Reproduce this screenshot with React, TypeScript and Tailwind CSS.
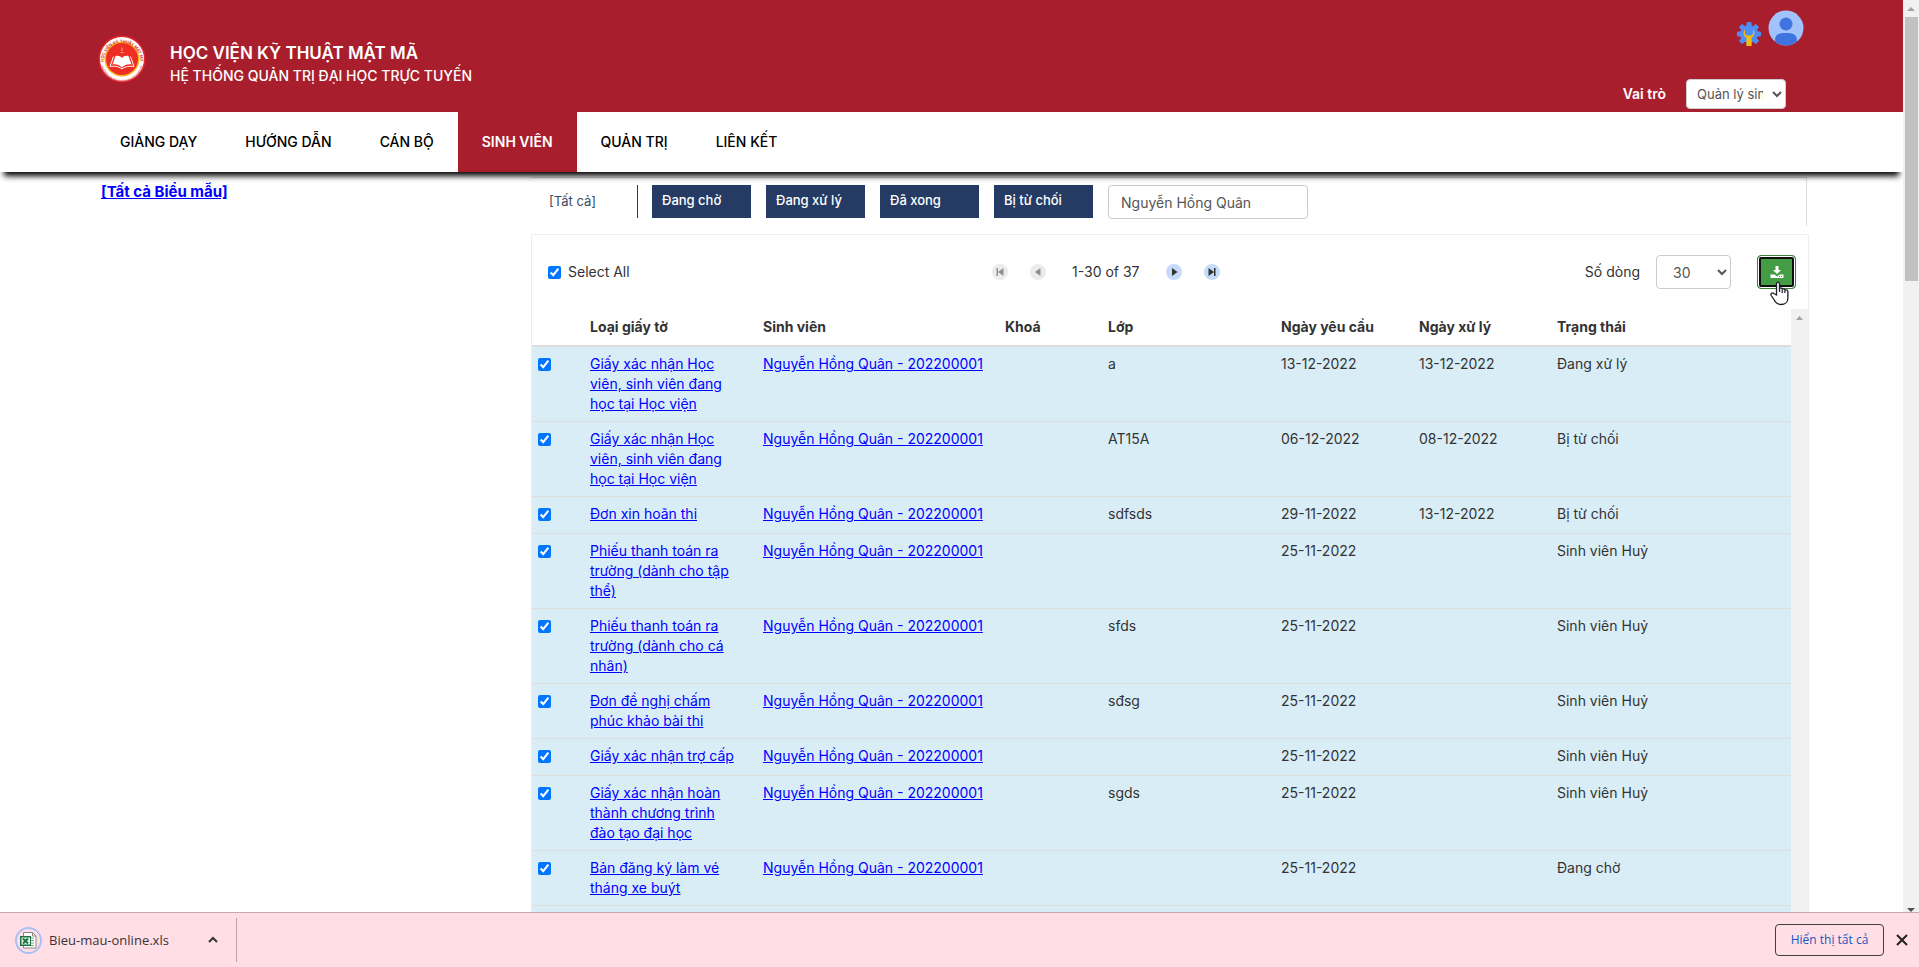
import { useState } from 'react';
import clsx from 'clsx';

type Status = 'Đang xử lý' | 'Bị từ chối' | 'Sinh viên Huỷ' | 'Đang chờ';

interface FormRequest {
  id: number;
  type: string;
  className: string;
  requestedAt: string;
  processedAt: string;
  status: Status;
}

const STUDENT = 'Nguyễn Hồng Quân - 202200001';

const menu = ['GIẢNG DẠY', 'HƯỚNG DẪN', 'CÁN BỘ', 'SINH VIÊN', 'QUẢN TRỊ', 'LIÊN KẾT'];
const filters = ['Đang chờ', 'Đang xử lý', 'Đã xong', 'Bị từ chối'];

const requests: FormRequest[] = [
  { id: 1, type: 'Giấy xác nhận Học viên, sinh viên đang học tại Học viện', className: 'a', requestedAt: '13-12-2022', processedAt: '13-12-2022', status: 'Đang xử lý' },
  { id: 2, type: 'Giấy xác nhận Học viên, sinh viên đang học tại Học viện', className: 'AT15A', requestedAt: '06-12-2022', processedAt: '08-12-2022', status: 'Bị từ chối' },
  { id: 3, type: 'Đơn xin hoãn thi', className: 'sdfsds', requestedAt: '29-11-2022', processedAt: '13-12-2022', status: 'Bị từ chối' },
  { id: 4, type: 'Phiếu thanh toán ra trường (dành cho tập thể)', className: '', requestedAt: '25-11-2022', processedAt: '', status: 'Sinh viên Huỷ' },
  { id: 5, type: 'Phiếu thanh toán ra trường (dành cho cá nhân)', className: 'sfds', requestedAt: '25-11-2022', processedAt: '', status: 'Sinh viên Huỷ' },
  { id: 6, type: 'Đơn đề nghị chấm phúc khảo bài thi', className: 'sđsg', requestedAt: '25-11-2022', processedAt: '', status: 'Sinh viên Huỷ' },
  { id: 7, type: 'Giấy xác nhận trợ cấp', className: '', requestedAt: '25-11-2022', processedAt: '', status: 'Sinh viên Huỷ' },
  { id: 8, type: 'Giấy xác nhận hoàn thành chương trình đào tạo đại học', className: 'sgds', requestedAt: '25-11-2022', processedAt: '', status: 'Sinh viên Huỷ' },
  { id: 9, type: 'Bản đăng ký làm vé tháng xe buýt', className: '', requestedAt: '25-11-2022', processedAt: '', status: 'Đang chờ' },
];

function Logo() {
  return (
    <svg viewBox="0 0 96 96" className="size-12" aria-hidden="true">
      <defs>
        <path id="ring-top" d="M11.5 52a36.5 36.5 0 1 1 73 0" />
        <path id="ring-bottom" d="M5.500 51a42.500 42.500 0 0 0 85 0" />
      </defs>
      <circle cx="48" cy="48" r="47" fill="#e5262b" />
      <circle cx="48" cy="48" r="44" fill="#fff" />
      <circle cx="48" cy="48" r="35" fill="#f7b51c" />
      <circle cx="48" cy="48" r="32" fill="#ee2e24" />
      <text fill="#d8343a" fontSize="8" fontWeight="700" fontFamily="Inter, sans-serif">
        <textPath href="#ring-top" startOffset="50%" textAnchor="middle">HỌC VIỆN KỸ THUẬT MẬT MÃ</textPath>
      </text>
      <text fill="#e0666a" fontSize="5" fontWeight="700" fontFamily="Inter, sans-serif">
        <textPath href="#ring-bottom" startOffset="50%" textAnchor="middle">ACADEMY OF CRYPTOGRAPHY TECHNIQUES</textPath>
      </text>
      <circle cx="9" cy="49" r="2" fill="#f5c518" />
      <circle cx="87" cy="49" r="2" fill="#f5c518" />
      <path d="M48 25v7M45 35h6" stroke="#f7a28d" strokeWidth="2" fill="none" />
      {/* Open book: pages, then the cover edge */}
      <path d="M48 46c-3-4-8-5-13-4l-6 17c7-1 13 0 19 6 6-6 12-7 19-6l-6-17c-5-1-10 0-13 4z" fill="#fff" />
      <path d="M31 43l-7 20c9-1 16-1 24 5 8-6 15-6 24-5l-7-20" fill="none" stroke="#fff" strokeWidth="2" />
    </svg>
  );
}

function SettingsIcon() {
  return (
    <svg viewBox="0 0 24 24" className="size-6" aria-hidden="true">
      <g fill="#4f8ff5">
        <circle cx="12" cy="12" r="9" />
        {[0, 45, 90, 135].map((angle) => (
          <rect key={angle} x="9.500" y="0" width="5" height="24" rx="1" transform={`rotate(${angle} 12 12)`} />
        ))}
      </g>
      <path d="M8 7.500c-2.500 3-1.500 7 1.500 8V24h5v-8.500c3-1 4-5 1.500-8v4.700l-2 1.300h-4l-2-1.300z" fill="#f9bb0b" />
    </svg>
  );
}

function AvatarIcon() {
  return (
    <svg viewBox="0 0 36 36" className="size-9" aria-hidden="true">
      <circle cx="18" cy="18" r="17.500" fill="#a1c2fa" />
      <circle cx="18" cy="14" r="6.500" fill="#3f74e0" />
      <path d="M7 31.500c0-6 2-8.500 11-8.500s11 2.500 11 8.500a17.500 17.500 0 0 1-22 0z" fill="#3f74e0" />
    </svg>
  );
}

function PageButton({ label, path, disabled }: { label: string; path: string; disabled?: boolean }) {
  return (
    <button
      type="button"
      aria-label={label}
      disabled={disabled}
      className={clsx(
        'flex size-4 items-center justify-center rounded-full',
        disabled ? 'bg-[#ececec] text-[#8f8f8f]' : 'bg-[#c6dafa] text-[#333333]'
      )}
    >
      <svg viewBox="0 0 16 16" className="size-4" fill="currentColor" aria-hidden="true">
        <path d={path} />
      </svg>
    </button>
  );
}

function ExportIcon() {
  return (
    <svg viewBox="0 0 14 14" className="size-3.5" aria-hidden="true">
      <path d="M5.500 1h3v4H11L7 9 3 5h2.500z" fill="#fff" />
      <path d="M.5 9.500h4L7 11.500l2.500-2h4v3.500H.5z" fill="#fff" />
      <path d="M9 11h1v1H9zM11 11h1v1h-1z" fill="#449d44" />
    </svg>
  );
}

function ExcelIcon() {
  return (
    <svg viewBox="0 0 27 27" className="size-[27px]" aria-hidden="true">
      <circle cx="13.500" cy="13.500" r="12.500" fill="none" stroke="#a9c0f5" strokeWidth="2" />
      <path d="M8.500 5.500h9l3.500 3.500v12H8.500z" fill="#fff" stroke="#8a8584" />
      <path d="M17.500 5.500V9H21" fill="none" stroke="#8a8584" />
      <path d="M16 11h3M16 13.500h3M16 16h3M16 18.500h3" stroke="#5fae85" />
      <path d="M5 9h11v10H5z" fill="#1e7145" />
      <path d="M6.500 10.500H15v7H6.500z" fill="#e9f3ed" />
      <path d="M8 11.500l5 5M13 11.500l-5 5" stroke="#1e7145" strokeWidth="2" />
    </svg>
  );
}

function HandCursor() {
  return (
    <svg viewBox="0 0 19 25" className="pointer-events-none absolute top-[26px] left-[13px] h-[25px] w-[19px]" aria-hidden="true">
      <path
        d="M6.500 14V3c0-2.500 3-2.500 3 0v5c0-1.500 2.700-1.500 2.700 0v.8c0-1.500 2.700-1.300 2.700.2v.8c0-1.500 3-1.200 3 .6V17c0 4-3 6.500-7 6.500-3.500 0-5.500-2-7-5L1.200 14.500c-1-2 1-3.300 2.600-2L6.500 14z"
        fill="#fff"
        stroke="#1d1d2b"
        strokeWidth="1.300"
      />
      <path d="M9.500 8v3M12.200 9v3M14.900 9.500V12" stroke="#1d1d2b" strokeWidth="1.200" />
    </svg>
  );
}

function Header() {
  return (
    <header className="flex h-28 shrink-0 justify-between bg-[#a91e2c] pr-[99px] pl-[98px] text-white">
      <div className="flex items-start gap-6 pt-[35px]">
        <Logo />
        <div className="pt-1.5">
          <h1 className="text-[17px] leading-6 font-semibold">HỌC VIỆN KỸ THUẬT MẬT MÃ</h1>
          <p className="text-sm leading-[22px] font-medium">HỆ THỐNG QUẢN TRỊ ĐẠI HỌC TRỰC TUYẾN</p>
        </div>
      </div>
      <div className="flex flex-col items-end justify-between pt-2.5 pb-[3px]">
        <div className="flex items-end gap-[7px]">
          <button type="button" aria-label="Cài đặt"><SettingsIcon /></button>
          <button type="button" aria-label="Tài khoản"><AvatarIcon /></button>
        </div>
        <div className="flex items-center gap-5 pr-[18px]">
          <label htmlFor="role" className="text-sm font-semibold">Vai trò</label>
          <select id="role" className="h-[30px] w-[100px] rounded border border-[#cccccc] bg-white px-1.5 text-[13px] text-[#555555]">
            <option>Quản lý sinh viên</option>
          </select>
        </div>
      </div>
    </header>
  );
}

function PageScrollbar() {
  return (
    <div className="flex w-4 shrink-0 flex-col items-center bg-[#f1f1f1]" aria-hidden="true">
      <svg viewBox="0 0 16 17" className="h-[17px] w-4 shrink-0"><path d="M4 11l4-4 4 4z" fill="#a3a3a3" /></svg>
      <div className="h-[264px] w-[13px] bg-[#c1c1c1]" />
      <svg viewBox="0 0 16 8" className="mt-auto h-2 w-4 shrink-0"><path d="M4 4l4 4 4-4z" fill="#505050" /></svg>
    </div>
  );
}

export default function App() {
  const [selected, setSelected] = useState<number[]>(requests.map((r) => r.id));
  const [keyword, setKeyword] = useState('Nguyễn Hồng Quân');

  const toggle = (id: number) =>
    setSelected((prev) => (prev.includes(id) ? prev.filter((x) => x !== id) : [...prev, id]));

  const allSelected = selected.length === requests.length;

  return (
    <div className="flex h-screen flex-col bg-white font-['Inter',sans-serif] text-sm leading-5 text-[#333333]">
      <div className="flex min-h-0 flex-1">
        <div className="flex min-w-0 flex-1 flex-col overflow-hidden">
          <Header />

          <nav className="relative z-10 flex h-[60px] shrink-0 bg-white pl-24 shadow-[0_8px_6px_-4px_#000000]">
            {menu.map((item) => (
              <a
                key={item}
                href="#"
                className={clsx(
                  'flex items-center px-6',
                  item === 'SINH VIÊN' ? 'bg-[#a91e2c] font-semibold text-white' : 'font-medium text-black'
                )}
              >
                {item}
              </a>
            ))}
          </nav>

          <div className="flex min-h-0 flex-1 pr-[94px] pl-[101px]">
            <aside className="w-1/4 shrink-0 pt-2.5">
              <a href="#" className="text-[15px] font-bold text-[#0000ff] underline">[Tất cả Biểu mẫu]</a>
            </aside>

            <main className="ml-[3px] flex min-w-0 flex-1 flex-col pt-[5px]">
              <div className="mr-0.5 flex h-[49px] shrink-0 items-start border-t border-r border-[#dddddd] pt-[7px] text-[13px]">
                <a href="#" className="mr-3.5 h-[33px] w-[107px] border-r border-[#253b63] pt-1.5 pl-[18px] text-[#3a4a63]">[Tất cả]</a>
                <div className="mr-[15px] flex gap-[15px]">
                  {filters.map((f) => (
                    <button key={f} type="button" className="h-[33px] w-[99px] bg-[#253b63] px-2.5 pb-1 text-left font-medium text-white">
                      {f}
                    </button>
                  ))}
                </div>
                <input
                  aria-label="Tìm sinh viên"
                  value={keyword}
                  onChange={(e) => setKeyword(e.target.value)}
                  className="h-[34px] w-[200px] rounded border border-[#cccccc] px-3 text-sm text-[#555555]"
                />
              </div>

              <section className="mt-2 flex min-h-0 flex-1 flex-col border-t border-r border-l border-[#eeeeee]">
                <div className="grid h-[74px] shrink-0 grid-cols-[36%_1fr_auto] items-center pr-3">
                  <label className="flex items-center gap-[7px] pl-4">
                    <input
                      type="checkbox"
                      checked={allSelected}
                      onChange={() => setSelected(allSelected ? [] : requests.map((r) => r.id))}
                      className="size-[13px]"
                    />
                    Select All
                  </label>
                  <div className="flex items-center gap-[22px] pl-[5px]">
                    <PageButton disabled label="Trang đầu" path="M4.500 4h1.500v8H4.500zM11.500 4v8L6 8z" />
                    <PageButton disabled label="Trang trước" path="M10.500 4v8L5 8z" />
                    <span className="mx-1">1-30 of 37</span>
                    <PageButton label="Trang sau" path="M6 4v8l5.500-4z" />
                    <PageButton label="Trang cuối" path="M4.500 4v8L10 8zM10 4h1.500v8H10z" />
                  </div>
                  <div className="flex items-center">
                    <label htmlFor="page-size" className="mr-4">Số dòng</label>
                    <select id="page-size" defaultValue="30" className="mr-[26px] h-[34px] w-[75px] rounded border border-[#cccccc] bg-white px-3 text-[#555555]">
                      <option>30</option>
                      <option>50</option>
                    </select>
                    <div className="relative">
                      <button
                        type="button"
                        aria-label="Xuất Excel"
                        className="flex h-[34px] w-[39px] items-center justify-center rounded border border-[#398439] bg-[#449d44] shadow-[inset_0_0_0_1px_#ffffff,inset_0_0_0_3px_#101010]"
                      >
                        <ExportIcon />
                      </button>
                      <HandCursor />
                    </div>
                  </div>
                </div>

                <div className="flex min-h-0 flex-1 overflow-hidden">
                  <div className="min-w-0 flex-1">
                    <table className="w-full table-fixed border-collapse text-left">
                      <colgroup>
                        <col className="w-[50px]" />
                        <col className="w-[173px]" />
                        <col className="w-[242px]" />
                        <col className="w-[103px]" />
                        <col className="w-[173px]" />
                        <col className="w-[138px]" />
                        <col className="w-[138px]" />
                        <col />
                      </colgroup>
                      <thead>
                        <tr className="h-[37px] border-b-2 border-[#dddddd]">
                          <th aria-label="Chọn" />
                          <th className="px-2">Loại giấy tờ</th>
                          <th className="px-2">Sinh viên</th>
                          <th className="px-2">Khoá</th>
                          <th className="px-2">Lớp</th>
                          <th className="px-2">Ngày yêu cầu</th>
                          <th className="px-2">Ngày xử lý</th>
                          <th className="px-2">Trạng thái</th>
                        </tr>
                      </thead>
                      <tbody>
                        {requests.map((r) => (
                          <tr key={r.id} className="border-b border-[#dddddd] bg-[#d9edf7] align-top">
                            <td className="pt-[11px] pl-1.5">
                              <input
                                type="checkbox"
                                aria-label={r.type}
                                checked={selected.includes(r.id)}
                                onChange={() => toggle(r.id)}
                                className="block size-[13px]"
                              />
                            </td>
                            <td className="pt-[7px] pr-4 pb-[7px] pl-2"><a href="#" className="text-[#0000ff] underline">{r.type}</a></td>
                            <td className="px-2 pt-[7px] pb-[9px] whitespace-nowrap"><a href="#" className="text-[#0000ff] underline">{STUDENT}</a></td>
                            <td className="px-2" />
                            <td className="px-2 pt-[7px]">{r.className}</td>
                            <td className="px-2 pt-[7px]">{r.requestedAt}</td>
                            <td className="px-2 pt-[7px]">{r.processedAt}</td>
                            <td className="px-2 pt-[7px]">{r.status}</td>
                          </tr>
                        ))}
                        <tr className="h-9 bg-[#d9edf7]"><td colSpan={8} /></tr>
                      </tbody>
                    </table>
                  </div>
                  <div className="w-[17px] shrink-0 bg-[#f1f1f1]" aria-hidden="true">
                    <svg viewBox="0 0 17 17" className="size-[17px]"><path d="M5 11l3.500-4 3.500 4z" fill="#a3a3a3" /></svg>
                  </div>
                </div>
              </section>
            </main>
          </div>
        </div>
        <PageScrollbar />
      </div>

      {/* Downloads shelf */}
      <footer className="flex h-[55px] shrink-0 items-center border-t border-[#c4a9ae] bg-[#ffdfe5] pr-[11px] pl-[15px] font-['Open_Sans',sans-serif] text-[13px]">
        <div className="flex h-11 w-[222px] items-center border-r border-[#c0a3a8]">
          <ExcelIcon />
          <span className="ml-[7px] text-[#3c3034]">Bieu-mau-online.xls</span>
          <button type="button" aria-label="Tuỳ chọn tải xuống" className="mr-[18px] ml-auto">
            <svg viewBox="0 0 10 10" className="size-2.5" fill="none" stroke="#333333" strokeWidth="2" aria-hidden="true"><path d="M1 7l4-4 4 4" /></svg>
          </button>
        </div>
        <button type="button" className="ml-auto h-8 w-[109px] rounded border border-[#3c4043] text-xs text-[#1a56c0]">Hiển thị tất cả</button>
        <button type="button" aria-label="Đóng" className="ml-3">
          <svg viewBox="0 0 12 12" className="size-3" stroke="#222222" strokeWidth="2" aria-hidden="true"><path d="M1 1l10 10M11 1L1 11" /></svg>
        </button>
      </footer>
    </div>
  );
}
